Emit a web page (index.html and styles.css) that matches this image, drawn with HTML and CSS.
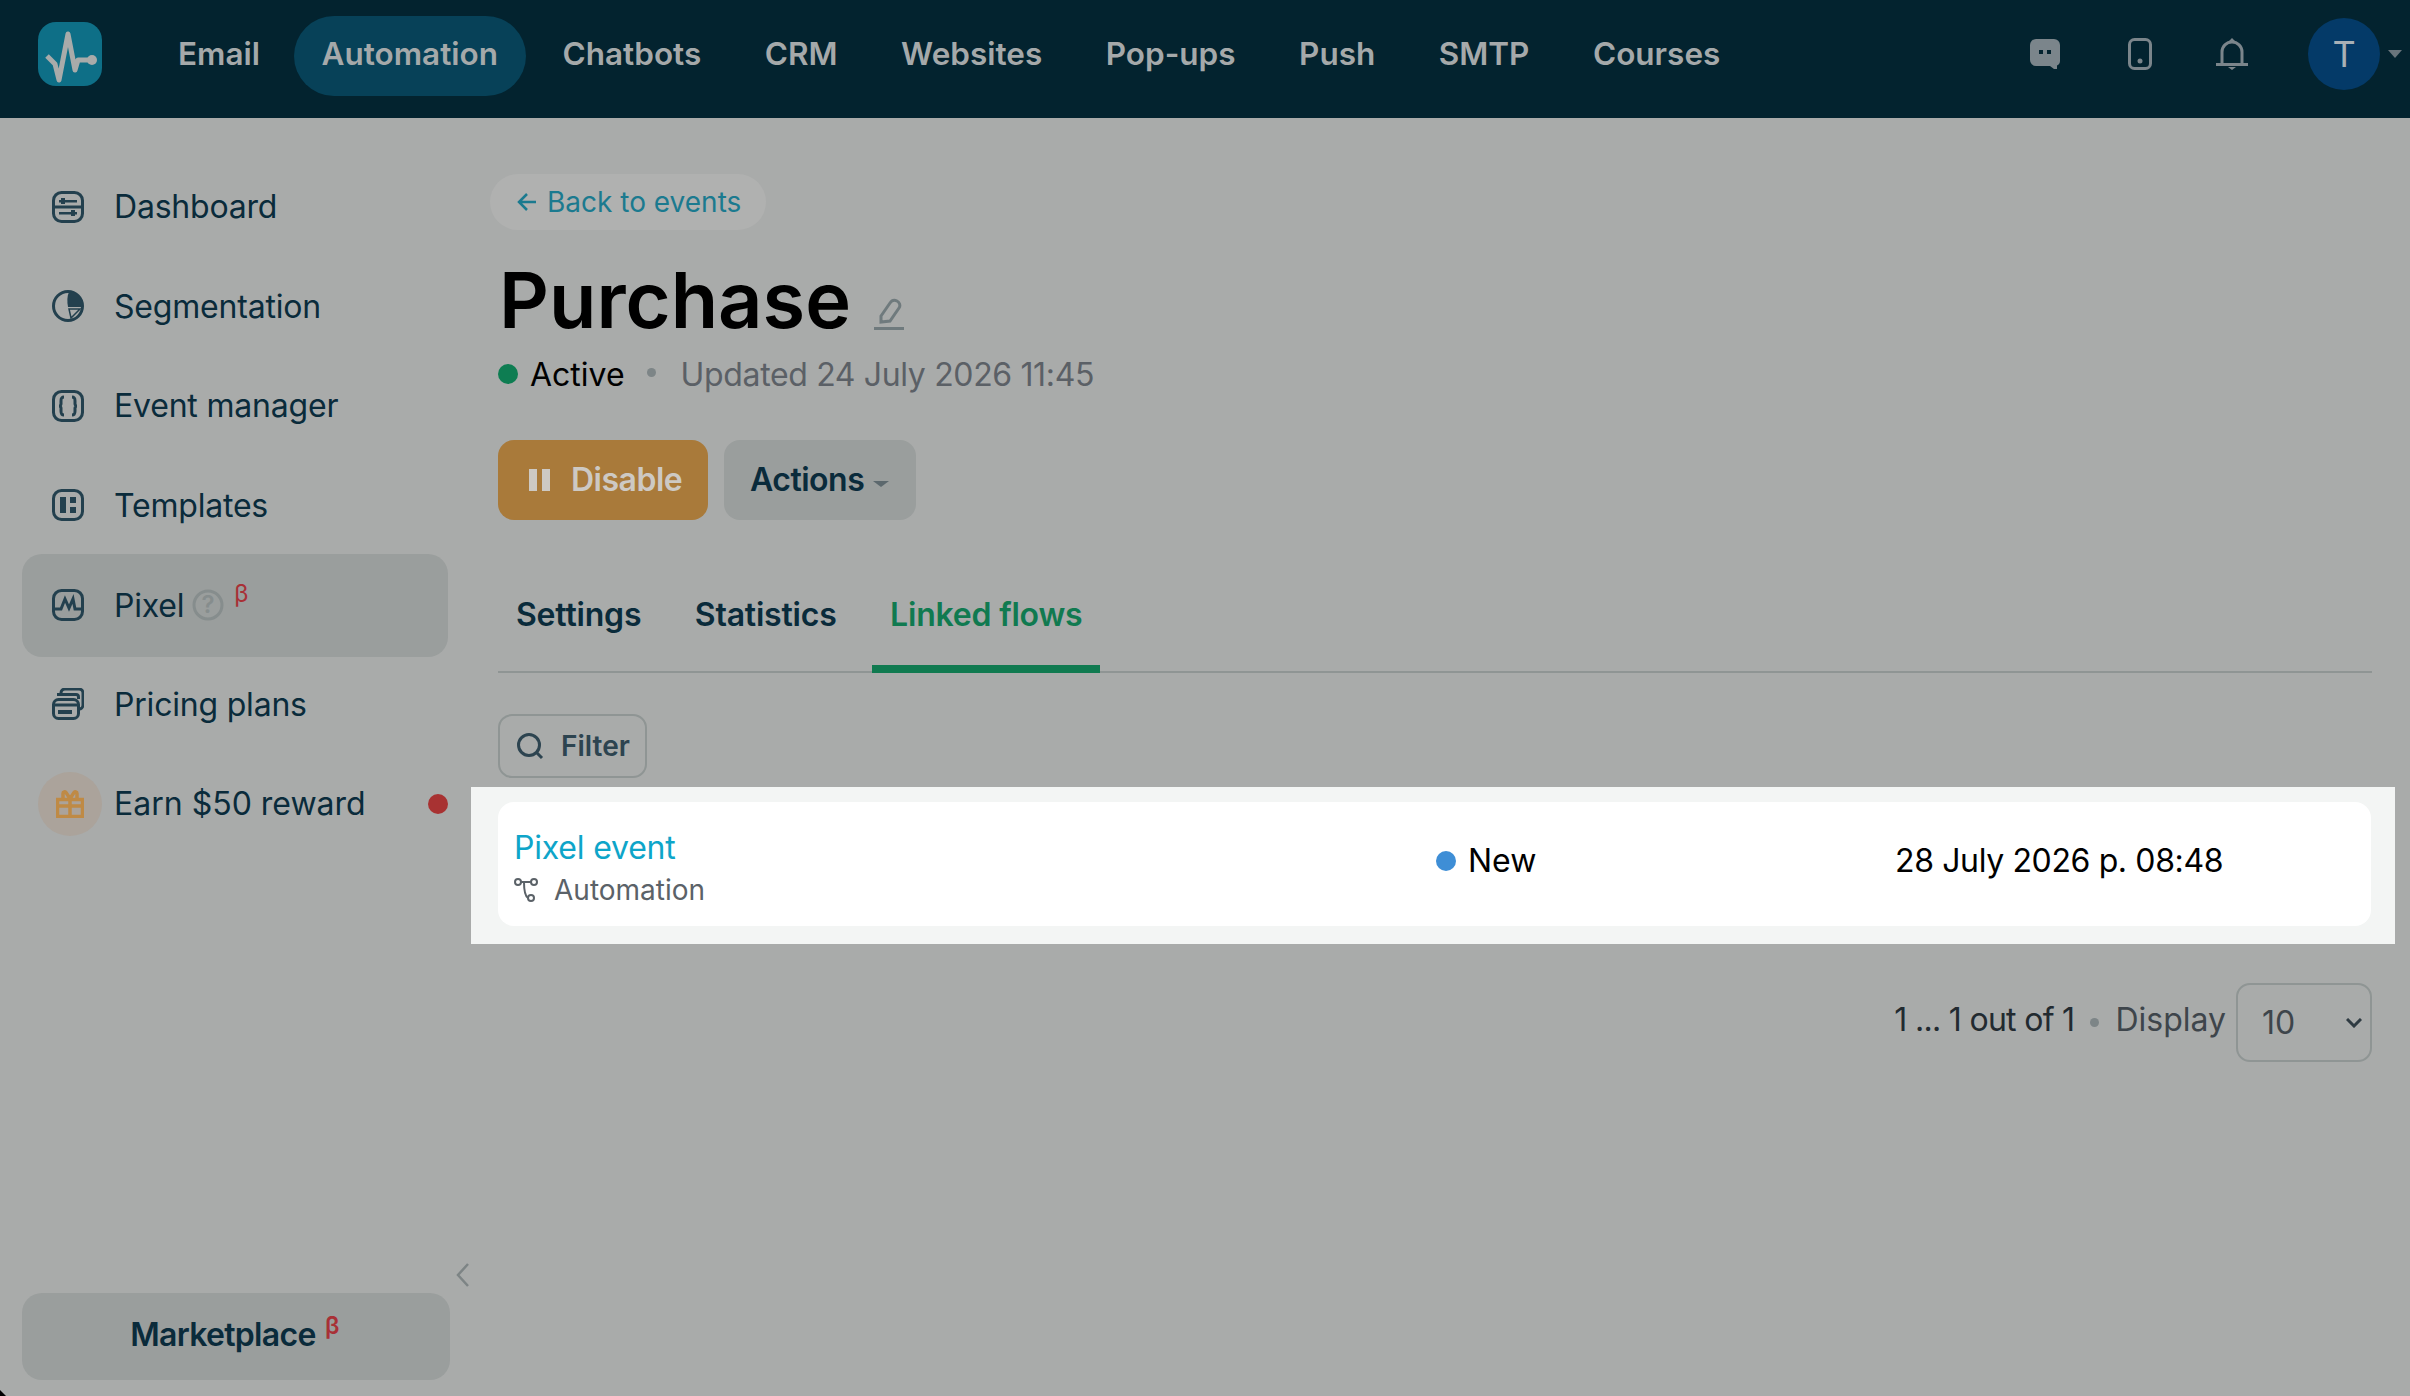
FILE: index.html
```html
<!DOCTYPE html>
<html lang="en">
<head>
    <meta charset="UTF-8">
    <meta name="viewport" content="width=device-width, initial-scale=1.0">
    <title>Purchase - Linked flows</title>
    <link rel="stylesheet" href="styles.css">
</head>
<body>

    <header class="topbar">
        <div class="logo">
            <svg viewBox="0 0 64 64" width="64" height="64"><path d="M9 34l8 8 4 16 9-46 7 36 3-10h13" fill="none" stroke="#a9abaa" stroke-width="5" stroke-linejoin="round"/><circle cx="54" cy="38" r="5" fill="#a9abaa"/></svg>
        </div>
        <nav class="topnav">
            <a>Email</a>
            <a class="active">Automation</a>
            <a>Chatbots</a>
            <a>CRM</a>
            <a>Websites</a>
            <a>Pop-ups</a>
            <a>Push</a>
            <a>SMTP</a>
            <a>Courses</a>
        </nav>
        <div class="topicons">
            <svg class="ico-chat" viewBox="0 0 30 30" width="30" height="30"><path d="M6 0h18a6 6 0 0 1 6 6v16a5 5 0 0 1-3 4.500v3.500h-3l-4-3H6a6 6 0 0 1-6-6V6a6 6 0 0 1 6-6z" fill="#7b858b"/><rect x="9" y="11" width="4" height="4" fill="#03232f"/><rect x="17" y="11" width="4" height="4" fill="#03232f"/></svg>
            <svg class="ico-phone" viewBox="0 0 24 32" width="24" height="32"><rect x="1.500" y="1.500" width="21" height="29" rx="5" fill="none" stroke="#7b858b" stroke-width="3"/><circle cx="12" cy="23" r="2.500" fill="#7b858b"/></svg>
            <svg class="ico-bell" viewBox="0 0 32 32" width="32" height="32"><path d="M6 26V14a10 10 0 0 1 20 0v12" fill="none" stroke="#7b858b" stroke-width="3"/><path d="M0 25h32v3H0z" fill="#7b858b"/><path d="M13 3l3-3 3 3zM12 29h8l-4 3z" fill="#7b858b"/></svg>
            <div class="avatar">T</div>
            <span class="avatar-caret"></span>
        </div>
    </header>

    <div class="layout">
        <aside class="sidebar">
            <ul class="sidemenu">
                <li>
                    <svg class="side-ico" viewBox="0 0 32 32"><rect x="1.500" y="1.500" width="29" height="29" rx="8"/><path d="M2 16h28"/><path class="solid" d="M7 9h18v2.500H7zM7 21h18v2.500H7zM9 7h4v6H9zM19 19h4v6h-4z"/></svg>
                    Dashboard
                </li>
                <li>
                    <svg class="side-ico" viewBox="0 0 32 32"><circle cx="16" cy="16" r="14.500"/><path class="solid" d="M17 2a14 14 0 0 1 14 14v1H16c-1-5-1-11 1-15z"/><path class="thin" d="M17 19h11l-9 9z"/></svg>
                    Segmentation
                </li>
                <li>
                    <svg class="side-ico" viewBox="0 0 32 32"><rect x="1.500" y="1.500" width="29" height="29" rx="8"/><path d="M12 7c-3 0-3 2-3 4v3c0 1-1 2-2 2 1 0 2 1 2 2v3c0 2 0 4 3 4M20 7c3 0 3 2 3 4v3c0 1 1 2 2 2-1 0-2 1-2 2v3c0 2 0 4-3 4"/></svg>
                    Event manager
                </li>
                <li>
                    <svg class="side-ico" viewBox="0 0 32 32"><rect x="1.500" y="1.500" width="29" height="29" rx="8"/><path class="solid" d="M8 8h6v16H8zM18 8h6v6h-6zM18 18h6v6h-6z"/></svg>
                    Templates
                </li>
                <li class="active">
                    <svg class="side-ico" viewBox="0 0 32 32"><rect x="1.500" y="1.500" width="29" height="29" rx="8"/><path d="M2 20h7l4-10 4 9 4-9 2 10h7"/></svg>
                    <span>Pixel</span>
                    <svg class="help" viewBox="0 0 32 32" width="32" height="32"><circle cx="16" cy="16" r="14" fill="none" stroke="#868d8d" stroke-width="3"/><text x="16" y="24" text-anchor="middle" class="help-mark">?</text></svg>
                    <sup class="beta">β</sup>
                </li>
                <li>
                    <svg class="side-ico" viewBox="0 0 32 32"><path d="M9 6V5a4 4 0 0 1 4-4h14a4 4 0 0 1 4 4v12a4 4 0 0 1-4 4"/><rect x="1.500" y="11.500" width="25" height="19" rx="5"/><path d="M5 6.500h19a2.500 2.500 0 0 1 2.500 2.500v2M2 17h24"/><path class="solid" d="M6 22h14v4H6z"/></svg>
                    Pricing plans
                </li>
                <li class="reward">
                    <span class="gift"><svg viewBox="0 0 28 28" width="28" height="28"><path d="M1.500 9.500h25v17h-25zM14 9.500v17M1.500 16h25M7 9V3.500c0-2 2-2 3-1l4 6 4-6c1-1 3-1 3 1V9" fill="none" stroke="#bf8a45" stroke-width="3.500"/></svg></span>
                    Earn $50 reward
                    <span class="reddot"></span>
                </li>
            </ul>
            <div class="side-bottom">
                <svg class="collapse" viewBox="0 0 14 26" width="14" height="26"><path d="M12 2L2 13l10 11" fill="none" stroke="#7d8485" stroke-width="2.500"/></svg>
                <button class="marketplace">Marketplace <sup class="beta">β</sup></button>
            </div>
        </aside>

        <main class="content">
            <a class="back">
                <svg viewBox="0 0 20 20" width="20" height="20"><path d="M19 10H2M10 2l-8 8 8 8" fill="none" stroke="#1b7a8f" stroke-width="2.500"/></svg>
                Back to events
            </a>
            <div class="title-row">
                <h1>Purchase</h1>
                <svg class="pencil" viewBox="0 0 32 32" width="32" height="32"><path d="M8 18L17 5c2-3 5-3 7-2s4 4 2 7l-9 13-9 1z" fill="none" stroke="#6f7a7d" stroke-width="3"/><path d="M1 30.500h30" stroke="#6f7a7d" stroke-width="3"/></svg>
            </div>
            <div class="status">
                <span class="dot green"></span>
                <span class="status-name">Active</span>
                <span class="sep"></span>
                <span class="updated">Updated 24 July 2026 11:45</span>
            </div>
            <div class="buttons">
                <button class="btn btn-disable"><span class="pause"></span>Disable</button>
                <button class="btn btn-actions">Actions<span class="caret"></span></button>
            </div>
            <div class="tabs">
                <a>Settings</a>
                <a>Statistics</a>
                <a class="active">Linked flows</a>
            </div>
            <button class="filter">
                <svg viewBox="0 0 28 28" width="28" height="28"><circle cx="13" cy="13" r="10.500" fill="none" stroke="#2d4450" stroke-width="3"/><path d="M20 20l6 6" stroke="#2d4450" stroke-width="3"/></svg>
                Filter
            </button>

            <div class="highlight">
                <div class="flow-row">
                    <div class="flow-name">
                        <a class="flow-link">Pixel event</a>
                        <div class="flow-type">
                            <svg viewBox="0 0 24 24" width="24" height="24"><g fill="none" stroke="#5b6268" stroke-width="2"><circle cx="4" cy="4" r="3"/><circle cx="20" cy="4" r="3"/><circle cx="17" cy="20" r="3"/><path d="M7 4h10M10 4c0 8 1 14 4 16"/></g></svg>
                            Automation
                        </div>
                    </div>
                    <div class="flow-status"><span class="dot blue"></span>New</div>
                    <div class="flow-date">28 July 2026 p. 08:48</div>
                </div>
            </div>

            <div class="pager">
                <span class="pager-count">1 ... 1 out of 1</span>
                <span class="sep"></span>
                <span class="pager-label">Display</span>
                <div class="pager-select">
                    <span>10</span>
                    <svg viewBox="0 0 16 10" width="16" height="10"><path d="M1 1l7 7 7-7" fill="none" stroke="#2f3b42" stroke-width="3"/></svg>
                </div>
            </div>
        </main>
    </div>

    <span class="corner"></span>

</body>
</html>
```

FILE: styles.css
```css
* {
    box-sizing: border-box;
}
body {
    margin: 0;
    height: 1396px;
    overflow: hidden;
    background-color: #a9abaa;
    font-family: Inter, "Noto Sans", sans-serif;
    font-size: 32px;
    color: #0a2b3b;
}
button {
    font-family: inherit;
    border: none;
}
.corner {
    position: absolute;
    left: 0;
    bottom: 0;
    border-style: solid;
    border-width: 6px 0 0 6px;
    border-color: transparent transparent transparent #000;
}

/* top bar */
.topbar {
    display: flex;
    align-items: center;
    height: 118px;
    padding: 0 8px 8px 38px;
    background-color: #03232f;
}
.logo {
    width: 64px;
    height: 64px;
    margin: -2px 48.5px 0 0;
    border-radius: 18px;
    background-color: #0e6f87;
}
.logo svg {
    display: block;
}
.topnav {
    display: flex;
    gap: 8.5px;
    margin-top: 2px;
}
.topnav a {
    height: 80px;
    padding: 0 27.5px;
    border-radius: 40px;
    font-size: 31.5px;
    line-height: 76px;
    font-weight: 600;
    color: #a5a9aa;
}
.topnav a.active {
    margin-left: -2px;
    padding-right: 28.5px;
    background-color: #074158;
}
.topicons {
    display: flex;
    align-items: center;
    margin-left: auto;
    margin-top: -2px;
}
.ico-chat {
    margin-right: 68px;
}
.ico-phone {
    margin-right: 64px;
}
.ico-bell {
    margin-right: 60px;
}
.avatar {
    width: 72px;
    height: 72px;
    border-radius: 50%;
    background-color: #043a68;
    color: #a9b0b6;
    font-size: 36px;
    line-height: 72px;
    text-align: center;
}
.avatar-caret {
    width: 0;
    height: 0;
    margin-left: 8px;
    border-style: solid;
    border-width: 8px 7.5px 0;
    border-color: #69757c transparent transparent;
}

.layout {
    display: flex;
    height: 1278px;
}

/* sidebar */
.sidebar {
    display: flex;
    flex-direction: column;
    justify-content: space-between;
    width: 471px;
    flex-shrink: 0;
    padding: 39px 0 16px 22px;
}
.sidemenu {
    margin: 0;
    padding: 0;
    list-style: none;
    width: 426px;
    letter-spacing: -0.2px;
}
.sidemenu li {
    display: flex;
    align-items: center;
    height: 99.5px;
    padding-left: 30px;
    border-radius: 20px;
    position: relative;
}
.sidemenu li.active {
    height: 103px;
    margin: -1.5px 0 -2px;
    background-color: #9a9e9d;
}
.side-ico {
    width: 32px;
    height: 32px;
    margin-right: 30px;
    flex-shrink: 0;
    fill: none;
    stroke: #23404e;
    stroke-width: 3;
}
.side-ico .solid {
    fill: #23404e;
    stroke: none;
}
.side-ico .thin {
    stroke-width: 1.5;
}
.help {
    margin-left: 8px;
}
.help-mark {
    font-size: 24px;
    font-weight: 600;
    fill: #868d8d;
}
.beta {
    color: #a83036;
    font-size: 24px;
    line-height: 1;
    vertical-align: super;
}
.sidemenu .beta {
    margin: -22px 0 0 10px;
}
.sidemenu li.reward {
    padding-left: 16px;
    letter-spacing: 0;
}
.gift {
    display: flex;
    align-items: center;
    justify-content: center;
    width: 64px;
    height: 64px;
    margin-right: 12px;
    border-radius: 50%;
    background-color: #aba39b;
}
.reddot {
    position: absolute;
    right: 0;
    top: 40px;
    width: 20px;
    height: 20px;
    border-radius: 50%;
    background-color: #a83232;
}
.side-bottom {
    display: flex;
    flex-direction: column;
    align-items: flex-end;
}
.collapse {
    margin: 0 1px 5px 0;
}
.marketplace {
    width: 428px;
    height: 87px;
    margin-right: 21px;
    padding: 0 3px 5px 0;
    border-radius: 20px;
    background-color: #9a9e9d;
    color: #0a2b3b;
    font-size: 32px;
    font-weight: 600;
    letter-spacing: -0.7px;
}
.marketplace .beta {
    margin-left: 2px;
}

/* main column */
.content {
    flex: 1;
    padding: 56px 38px 0 27px;
}
.back {
    display: inline-flex;
    align-items: center;
    gap: 10px;
    height: 56px;
    margin-left: -8px;
    padding: 0 25px 0 27px;
    border-radius: 28px;
    background-color: #b0b1b0;
    color: #1b7a8f;
    font-size: 28px;
}
.title-row {
    display: flex;
    align-items: flex-end;
    margin-top: 24px;
}
h1 {
    margin: 0 22px 0 1px;
    color: #000;
    font-size: 77.5px;
    font-weight: 600;
    line-height: 92px;
}
.pencil {
    margin-bottom: 16px;
}
.status {
    display: flex;
    align-items: center;
    margin-top: 4px;
    height: 48px;
}
.dot {
    display: inline-block;
    width: 20px;
    height: 20px;
    border-radius: 50%;
}
.dot.green {
    background-color: #0e7d52;
}
.dot.blue {
    background-color: #3e8ed6;
}
.status-name {
    margin-left: 12px;
    color: #000;
}
.sep {
    width: 9px;
    height: 9px;
    border-radius: 50%;
    background-color: #7d8587;
}
.status .sep {
    margin: -4px 25px 0 22px;
}
.updated {
    color: #5b6066;
    letter-spacing: -0.35px;
}
.buttons {
    display: flex;
    gap: 16px;
    margin-top: 42px;
}
.btn {
    display: flex;
    align-items: center;
    height: 80px;
    padding-bottom: 2px;
    border-radius: 16px;
    font-size: 32px;
    font-weight: 600;
    letter-spacing: -0.5px;
}
.btn-disable {
    width: 210px;
    padding-left: 31px;
    background-color: #a97a3a;
    color: #cdc9c3;
}
.pause {
    width: 21px;
    height: 22px;
    margin-right: 21px;
    border-left: 8px solid #cdc9c3;
    border-right: 8px solid #cdc9c3;
}
.btn-actions {
    width: 192px;
    padding-left: 26px;
    background-color: #9a9e9d;
    color: #0a2b3b;
}
.caret {
    margin: 8px 0 0 9px;
    border-style: solid;
    border-width: 6px 8px 0;
    border-color: #5c686d transparent transparent;
}
.tabs {
    display: flex;
    gap: 17.5px;
    height: 115px;
    margin-top: 38px;
    border-bottom: 2px solid #8f9594;
    font-weight: 600;
    letter-spacing: -0.2px;
}
.tabs a {
    height: 115px;
    padding: 37px 18px 0;
    line-height: 40px;
}
.tabs a.active {
    color: #107a50;
    border-bottom: 8px solid #107a50;
}
.filter {
    display: flex;
    align-items: center;
    width: 149px;
    height: 64px;
    margin: 41px 0 0;
    padding-left: 16px;
    border: 2px solid #8f9594;
    border-radius: 14px;
    background: none;
    color: #2d4450;
    font-size: 28px;
    font-weight: 600;
}
.filter svg {
    margin-right: 17px;
}
.highlight {
    margin: 9px -23px 0 -27px;
    padding: 15px 24px 18px 27px;
    background-color: #f3f5f4;
}
.flow-row {
    display: flex;
    align-items: center;
    height: 124px;
    padding-left: 16px;
    border-radius: 16px;
    background-color: #fff;
}
.flow-name {
    width: 922px;
    padding-top: 6px;
}
.flow-link {
    display: block;
    color: #0ea5c9;
    line-height: 45px;
    letter-spacing: -0.2px;
}
.flow-type {
    display: flex;
    align-items: center;
    gap: 16px;
    color: #5b6268;
    font-size: 28px;
    line-height: 40px;
}
.flow-status {
    display: flex;
    align-items: center;
    gap: 12px;
    width: 459px;
    padding-bottom: 7px;
    color: #000;
}
.flow-date {
    padding-bottom: 7px;
    color: #000;
    letter-spacing: -0.37px;
}
.pager {
    display: flex;
    align-items: center;
    justify-content: flex-end;
    height: 79px;
    margin-top: 39px;
    color: #222a30;
}
.pager-count {
    margin-bottom: 7px;
    letter-spacing: -0.7px;
}
.pager .sep {
    margin: 0 16px;
}
.pager-label {
    margin: 0 10px 7px 0;
    color: #3e454b;
}
.pager-select {
    display: flex;
    align-items: center;
    justify-content: space-between;
    width: 136px;
    height: 79px;
    padding: 0 8px 0 24px;
    border: 2px solid #8f9594;
    border-radius: 14px;
    color: #3e454b;
}
```
